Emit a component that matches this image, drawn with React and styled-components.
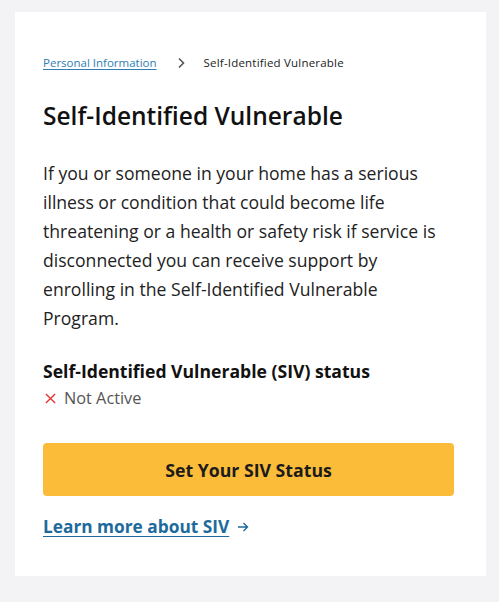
import React from "react";
import styled, { createGlobalStyle } from "styled-components";

const GlobalStyle = createGlobalStyle`
  html, body {
    margin: 0;
    padding: 0;
    background: #f3f3f5;
  }
  body {
    font-family: "Open Sans", "Noto Sans", sans-serif;
    color: #1b1b1b;
  }
`;

const Page = styled.div`
  padding: 12px 13px 27px 15px;
  min-height: 602px;
  box-sizing: border-box;
`;

const Card = styled.section`
  background: #fff;
  padding: 43px 32px 37px 28px;
  display: flex;
  flex-direction: column;
`;

const Breadcrumb = styled.nav`
  display: flex;
  align-items: center;
  font-size: 11.5px;
  line-height: 16px;
`;

const CrumbLink = styled.a`
  color: #2f7db3;
  text-decoration: underline;
  text-underline-offset: 2px;
`;

const Chevron = styled.svg`
  width: 12px;
  height: 12px;
  margin: 0 17px 0 18px;
  color: #555;
`;

const CrumbCurrent = styled.span`
  color: #222;
  letter-spacing: 0.2px;
`;

const Title = styled.h1`
  margin: 29px 0 0;
  font-size: 24.5px;
  line-height: 32px;
  font-weight: 600;
  color: #111;
`;

const Body = styled.p`
  margin: 27px 0 0;
  max-width: 400px;
  font-size: 17.6px;
  line-height: 29px;
  color: #222;
`;

const StatusHeading = styled.h2`
  margin: 26px 0 0;
  font-size: 17.6px;
  line-height: 24px;
  font-weight: 700;
  color: #111;
`;

const StatusRow = styled.div`
  display: flex;
  align-items: center;
  gap: 8px;
  margin-top: 4px;
  font-size: 16.3px;
  line-height: 22px;
  color: #555;
`;

const Cross = styled.svg`
  width: 11px;
  height: 11px;
  margin-left: 2px;
  color: #e53935;
`;

const Button = styled.button`
  margin-top: 34px;
  height: 53px;
  border: none;
  border-radius: 4px;
  background: #fbbc3a;
  font-family: inherit;
  font-size: 17.7px;
  font-weight: 700;
  color: #1b1b1b;
  cursor: pointer;
`;

const LearnMore = styled.a`
  margin-top: 19px;
  display: inline-flex;
  align-items: center;
  align-self: flex-start;
  gap: 8px;
  font-size: 17.3px;
  line-height: 24px;
  font-weight: 700;
  color: #1d6a9c;
  text-decoration: none;
`;

const LinkText = styled.span`
  text-decoration: underline;
  text-underline-offset: 3px;
`;

const Arrow = styled.svg`
  width: 12px;
  height: 12px;
`;

export default function App() {
  return (
    <>
      <GlobalStyle />
      <Page>
        <Card>
          <Breadcrumb>
            <CrumbLink href="#">Personal Information</CrumbLink>
            <Chevron viewBox="0 0 12 12" fill="none" stroke="currentColor" strokeWidth="1.6">
              <path d="M4 1.5 L8.5 6 L4 10.5" />
            </Chevron>
            <CrumbCurrent>Self-Identified Vulnerable</CrumbCurrent>
          </Breadcrumb>
          <Title>Self-Identified Vulnerable</Title>
          <Body>
            If you or someone in your home has a serious illness or condition
            that could become life threatening or a health or safety risk if
            service is disconnected you can receive support by enrolling in the
            Self-Identified Vulnerable Program.
          </Body>
          <StatusHeading>Self-Identified Vulnerable (SIV) status</StatusHeading>
          <StatusRow>
            <Cross viewBox="0 0 12 12" stroke="currentColor" strokeWidth="1.6">
              <path d="M1 1 L11 11 M11 1 L1 11" />
            </Cross>
            Not Active
          </StatusRow>
          <Button type="button">Set Your SIV Status</Button>
          <LearnMore href="#">
            <LinkText>Learn more about SIV</LinkText>
            <Arrow viewBox="0 0 12 12" fill="none" stroke="currentColor" strokeWidth="1.4">
              <path d="M1 6 H10.5 M6.5 2 L10.5 6 L6.5 10" />
            </Arrow>
          </LearnMore>
        </Card>
      </Page>
    </>
  );
}
